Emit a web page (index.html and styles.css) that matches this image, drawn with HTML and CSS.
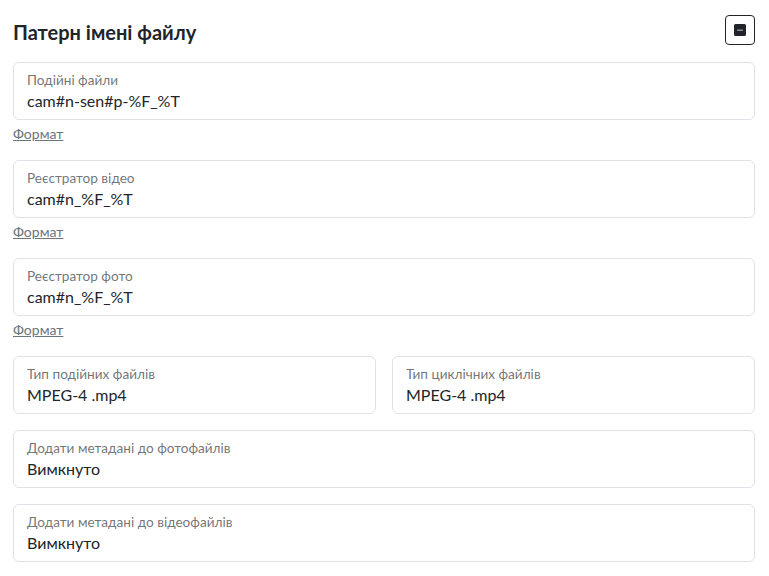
FILE: index.html
```html
<!DOCTYPE html>
<html lang="uk">
<head>
<meta charset="utf-8">
<link rel="stylesheet" href="styles.css">
</head>
<body>
<div class="page">
  <div class="header">
    <h4 class="title">Патерн імені файлу</h4>
    <button class="collapse-btn" type="button" aria-label="collapse">
      <svg width="12" height="12" viewBox="0 0 16 16" fill="#212529"><path d="M2 0a2 2 0 0 0-2 2v12a2 2 0 0 0 2 2h12a2 2 0 0 0 2-2V2a2 2 0 0 0-2-2zm2.5 7.5h7a.5.5 0 0 1 0 1h-7a.5.5 0 0 1 0-1"/></svg>
    </button>
  </div>

  <div class="group">
    <div class="field"><span class="label">Подійні файли</span><span class="value">cam#n-sen#p-%F_%T</span></div>
    <a class="help-link" href="#">Формат</a>
  </div>

  <div class="group">
    <div class="field"><span class="label">Реєстратор відео</span><span class="value">cam#n_%F_%T</span></div>
    <a class="help-link" href="#">Формат</a>
  </div>

  <div class="group">
    <div class="field"><span class="label">Реєстратор фото</span><span class="value">cam#n_%F_%T</span></div>
    <a class="help-link" href="#">Формат</a>
  </div>

  <div class="row">
    <div class="field"><span class="label">Тип подійних файлів</span><span class="value">MPEG-4 .mp4</span></div>
    <div class="field"><span class="label">Тип циклічних файлів</span><span class="value">MPEG-4 .mp4</span></div>
  </div>

  <div class="group-plain">
    <div class="field"><span class="label">Додати метадані до фотофайлів</span><span class="value">Вимкнуто</span></div>
  </div>

  <div class="group-plain">
    <div class="field"><span class="label">Додати метадані до відеофайлів</span><span class="value">Вимкнуто</span></div>
  </div>
</div>
</body>
</html>
```

FILE: styles.css
```css
html, body {
  margin: 0;
  padding: 0;
  background: #ffffff;
}
body {
  font-family: Lato, "Noto Sans", "Liberation Sans", sans-serif;
  color: #212529;
}
.page {
  padding: 15px 14px 0 13px;
}
.header {
  display: flex;
  align-items: center;
  justify-content: space-between;
  height: 30px;
  margin-bottom: 17px;
}
.title {
  margin: 0;
  padding-top: 3px;
  font-size: 20px;
  font-weight: 700;
  line-height: 28px;
  color: #212529;
}
.collapse-btn {
  width: 30px;
  height: 30px;
  padding: 0;
  border: 1px solid #212529;
  border-radius: 4px;
  background: #fff;
  display: flex;
  align-items: center;
  justify-content: center;
}
.group {
  margin-bottom: 16px;
}
.group-plain {
  margin-bottom: 16px;
}
.field {
  box-sizing: border-box;
  height: 58px;
  border: 1px solid #dee2e6;
  border-radius: 6px;
  padding: 8px 13px 0 13px;
  display: flex;
  flex-direction: column;
}
.label {
  font-size: 13.6px;
  line-height: 18px;
  color: rgba(33, 37, 41, 0.65);
}
.value {
  font-size: 16px;
  line-height: 23px;
  color: #212529;
}
.help-link {
  display: inline-block;
  vertical-align: top;
  margin-top: 3px;
  font-size: 14px;
  line-height: 21px;
  color: #6c757d;
  text-decoration: underline;
}
.row {
  display: grid;
  grid-template-columns: 1fr 1fr;
  column-gap: 16px;
  margin-bottom: 16px;
}
```
